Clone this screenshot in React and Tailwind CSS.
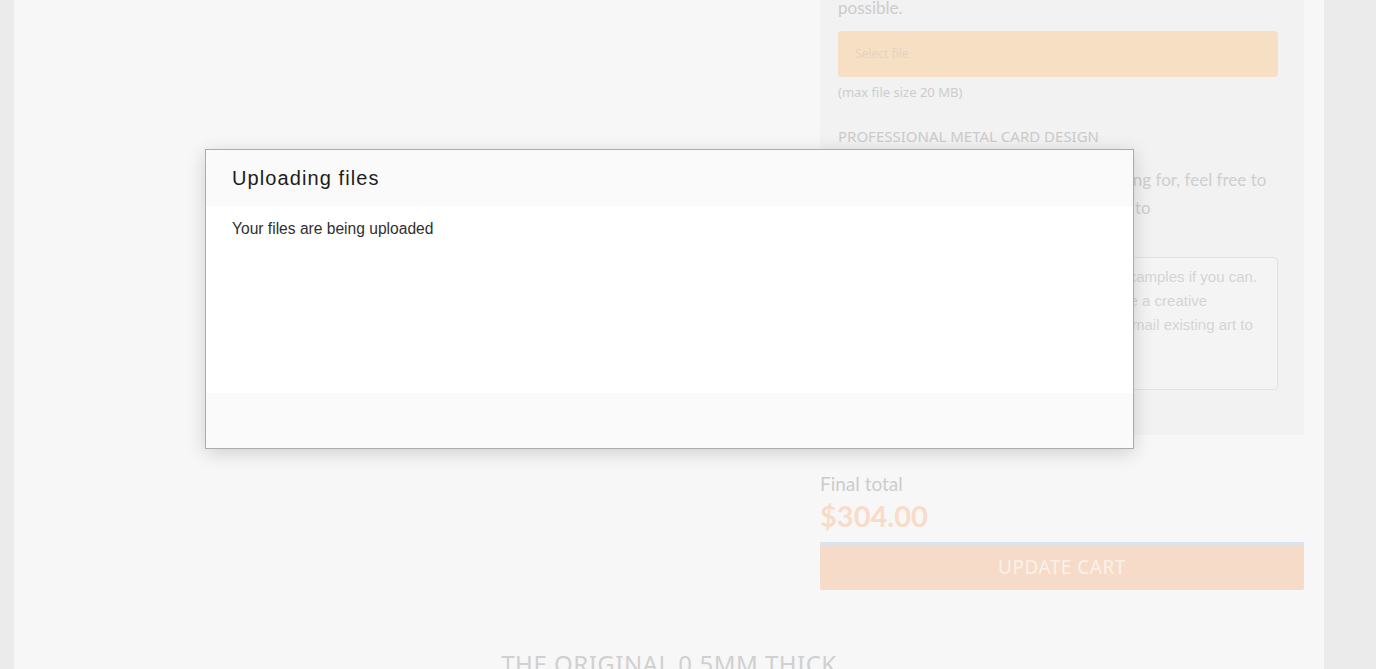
export default function App() {
  return (
    <div className="relative h-[669px] overflow-hidden bg-[#ebebeb]">
      <div className="ml-[14px] h-full w-[1310px] bg-[#f7f7f7]">
        <div className="flex">
          <div className="w-[806px]" />
          <div className="w-[484px]">
            <div className="bg-[#f2f2f2] pb-[45px] pl-[18px] pr-[26px]" style={{ fontFamily: '"Noto Sans", "Open Sans", sans-serif' }}>
              <p className="-mt-[4px] text-[17px] leading-[24px] text-[#cccccc]" style={{ fontFamily: "Lato, sans-serif" }}>possible.</p>
              <button className="mt-[11px] flex h-[46px] w-full items-center rounded-[4px] bg-[#f7dfc3] px-[17px] text-[12px] text-[#e3d3c2]">
                Select file
              </button>
              <p className="mt-[6px] text-[13px] leading-[18px] text-[#cdcdcd]">(max file size 20 MB)</p>
              <h3 className="mt-[24px] text-[15px] leading-[22px] text-[#cbcbcb]">PROFESSIONAL METAL CARD DESIGN</h3>
              <p className="mt-[19px] whitespace-nowrap text-[17px] leading-[28px] text-[#cfcfcf]" style={{ fontFamily: "Lato, sans-serif" }}>
                If you don't see the design you are looking for, feel free to
                <br />
                contact us and describe your own ideas to
              </p>
              <div className="mt-[35px] h-[133px] rounded-[4px] border border-[#e2e2e2] bg-[#f4f4f4] px-[12px] pt-[7px] text-[15px] leading-[24px] text-[#d4d4d4]" style={{ fontFamily: '"Liberation Sans", Arial, sans-serif' }}>
                <div className="whitespace-nowrap">Describe your ideal card idea and share examples if you can.</div>
                <div className="whitespace-nowrap">If you do not have artwork ready, we'll have a creative</div>
                <div className="whitespace-nowrap">designer help you out, or you can simply email existing art to</div>
                <div className="whitespace-nowrap">our team.</div>
              </div>
            </div>
            <div style={{ fontFamily: "Lato, sans-serif" }}>
              <p className="mt-[35px] text-[19px] leading-[28px] text-[#cccccc]">Final total</p>
              <p className="text-[29px] font-bold leading-[36px] text-[#f8dcc9]">$304.00</p>
              <div className="mt-[8px] h-[3px] bg-[#dbe5f2]" />
              <button className="flex h-[45px] w-full items-center justify-center rounded-b-[2px] bg-[#f7dbc9] text-[19px] tracking-[0.5px] text-[#fbf1ea]" style={{ fontFamily: '"Noto Sans", "Open Sans", sans-serif' }}>
                UPDATE CART
              </button>
            </div>
          </div>
        </div>
        <h2 className="mt-[56px] text-center text-[24px] leading-[36px] tracking-[0.5px] text-[#d0d0d0]" style={{ fontFamily: '"Noto Sans", "Open Sans", sans-serif' }}>
          THE ORIGINAL 0.5MM THICK
        </h2>
      </div>

      <div className="absolute left-[205px] top-[149px] flex h-[300px] w-[929px] flex-col border border-[#acacac] shadow-[0_4px_18px_rgba(0,0,0,0.16)]" style={{ fontFamily: '"Liberation Sans", Arial, sans-serif' }}>
        <div className="flex h-[56px] items-center bg-[#fafafa] px-[26px]">
          <h1 className="text-[20px] tracking-[1.1px] text-[#1d1d1d]">Uploading files</h1>
        </div>
        <div className="h-[187px] bg-white px-[26px] pt-[13px]">
          <p className="text-[15.6px] leading-[20px] text-[#303030]">Your files are being uploaded</p>
        </div>
        <div className="flex-1 bg-[#fafafa]" />
      </div>
    </div>
  );
}
